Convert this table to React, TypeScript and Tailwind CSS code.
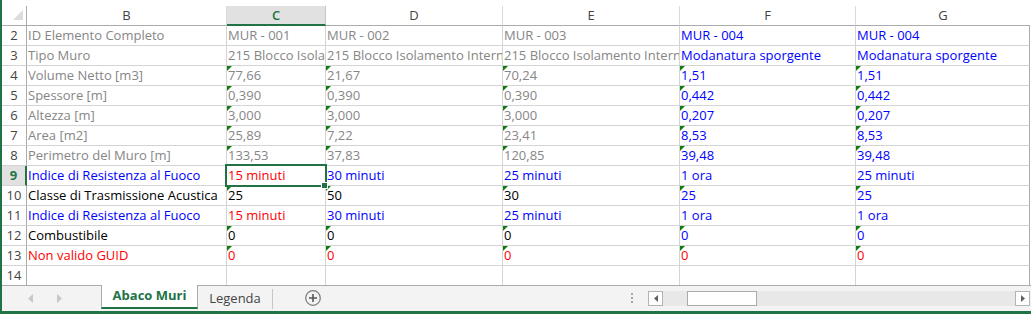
import React from 'react';

type C = 'g' | 'b' | 'r' | 'k';
const colorCls: Record<C, string> = {
  g: 'text-[#868686]',
  b: 'text-[#0000ff]',
  r: 'text-[#ff0000]',
  k: 'text-black',
};

type Row = { n: number; tri?: boolean; cells: [string, C][] };

const T3 = '215 Blocco Isolamento Interno';

const rows: Row[] = [
  { n: 2, cells: [['ID Elemento Completo', 'g'], ['MUR - 001', 'g'], ['MUR - 002', 'g'], ['MUR - 003', 'g'], ['MUR - 004', 'b'], ['MUR - 004', 'b']] },
  { n: 3, cells: [['Tipo Muro', 'g'], [T3, 'g'], [T3, 'g'], [T3, 'g'], ['Modanatura sporgente', 'b'], ['Modanatura sporgente', 'b']] },
  { n: 4, tri: true, cells: [['Volume Netto [m3]', 'g'], ['77,66', 'g'], ['21,67', 'g'], ['70,24', 'g'], ['1,51', 'b'], ['1,51', 'b']] },
  { n: 5, tri: true, cells: [['Spessore [m]', 'g'], ['0,390', 'g'], ['0,390', 'g'], ['0,390', 'g'], ['0,442', 'b'], ['0,442', 'b']] },
  { n: 6, tri: true, cells: [['Altezza [m]', 'g'], ['3,000', 'g'], ['3,000', 'g'], ['3,000', 'g'], ['0,207', 'b'], ['0,207', 'b']] },
  { n: 7, tri: true, cells: [['Area [m2]', 'g'], ['25,89', 'g'], ['7,22', 'g'], ['23,41', 'g'], ['8,53', 'b'], ['8,53', 'b']] },
  { n: 8, tri: true, cells: [['Perimetro del Muro [m]', 'g'], ['133,53', 'g'], ['37,83', 'g'], ['120,85', 'g'], ['39,48', 'b'], ['39,48', 'b']] },
  { n: 9, cells: [['Indice di Resistenza al Fuoco', 'b'], ['15 minuti', 'r'], ['30 minuti', 'b'], ['25 minuti', 'b'], ['1 ora', 'b'], ['25 minuti', 'b']] },
  { n: 10, tri: true, cells: [['Classe di Trasmissione Acustica', 'k'], ['25', 'k'], ['50', 'k'], ['30', 'k'], ['25', 'b'], ['25', 'b']] },
  { n: 11, cells: [['Indice di Resistenza al Fuoco', 'b'], ['15 minuti', 'r'], ['30 minuti', 'b'], ['25 minuti', 'b'], ['1 ora', 'b'], ['1 ora', 'b']] },
  { n: 12, tri: true, cells: [['Combustibile', 'k'], ['0', 'k'], ['0', 'k'], ['0', 'k'], ['0', 'b'], ['0', 'b']] },
  { n: 13, tri: true, cells: [['Non valido GUID', 'r'], ['0', 'r'], ['0', 'r'], ['0', 'r'], ['0', 'r'], ['0', 'r']] },
];

const letters = ['B', 'C', 'D', 'E', 'F', 'G'];

function Tri() {
  return (
    <div className="absolute left-0 top-0 w-0 h-0 border-t-[5px] border-r-[5px] border-t-[#107c10] border-r-transparent" />
  );
}

export default function App() {
  return (
    <div className="w-[1031px] h-[314px] bg-white border-l-2 border-[#217346] flex flex-col overflow-hidden font-['Open_Sans',sans-serif] text-[13px]">
      <div className="h-[6px] shrink-0" />
      <div className="grid grid-cols-[25px_200px_99px_177px_177px_176px_174px] shrink-0">
        {/* header row */}
        <div className="relative h-[20px] border-r border-b border-[#ababab]">
          <svg className="absolute left-0 top-0" width="24" height="19" viewBox="0 0 24 19">
            <polygon points="21,4 21,14 11,14" fill="#dcdcdc" />
          </svg>
        </div>
        {letters.map((l, i) =>
          l === 'C' ? (
            <div
              key={l}
              className="h-[20px] bg-[#e1e1e1] border-r border-r-[#c6c6c6] border-b-2 border-b-[#217346] flex items-center justify-center text-[#217346] font-semibold leading-none"
            >
              {l}
            </div>
          ) : (
            <div
              key={l}
              className={`h-[20px] border-b border-b-[#ababab] flex items-center justify-center text-[#444] leading-none ${
                i === 5 ? '' : 'border-r border-r-[#dadada]'
              }`}
            >
              {l}
            </div>
          )
        )}
        {rows.map((r) => (
          <React.Fragment key={r.n}>
            {r.n === 9 ? (
              <div className="h-[20px] bg-[#e1e1e1] border-r-2 border-r-[#217346] border-b border-b-[#d4d4d4] text-center leading-[19px] text-[#217346] font-bold">
                {r.n}
              </div>
            ) : (
              <div className="h-[20px] border-r border-r-[#ababab] border-b border-b-[#d4d4d4] text-center leading-[19px] text-[#444]">
                {r.n}
              </div>
            )}
            {r.cells.map(([t, c], i) => (
              <div
                key={i}
                className={`relative h-[20px] border-b border-b-[#d4d4d4] border-r ${
                  i === 5 ? 'border-r-[#ababab]' : 'border-r-[#d4d4d4]'
                }`}
              >
                <div className={`h-[19px] overflow-hidden whitespace-nowrap pl-px leading-[19px] ${colorCls[c]}`}>{t}</div>
                {r.tri && i > 0 && <Tri />}
                {r.n === 9 && i === 1 && (
                  <>
                    <div className="absolute z-10 -left-[2px] -top-[2px] w-[102px] h-[23px] border-2 border-[#217346]" />
                    <div className="absolute z-20 left-[94px] top-[16px] w-[7px] h-[7px] bg-[#217346] border border-white" />
                  </>
                )}
              </div>
            ))}
          </React.Fragment>
        ))}
        {/* row 14 */}
        <div className="h-[19px] border-r border-r-[#ababab] text-center leading-[19px] text-[#444]">14</div>
        {letters.map((l, i) => (
          <div
            key={l}
            className={`h-[19px] border-r ${i === 5 ? 'border-r-[#ababab]' : 'border-r-[#d4d4d4]'}`}
          />
        ))}
      </div>

      {/* sheet tabs bar */}
      <div className="flex h-[26px] shrink-0 bg-[#f3f3f3]">
        <div className="w-[99px] border-t border-[#ababab] flex items-center pl-[26px] gap-[24px]">
          <svg width="5" height="9" viewBox="0 0 5 9">
            <polygon points="5,0 0,4.5 5,9" fill="#c8c8c8" />
          </svg>
          <svg width="5" height="9" viewBox="0 0 5 9">
            <polygon points="0,0 5,4.5 0,9" fill="#c8c8c8" />
          </svg>
        </div>
        <div className="w-[97px] h-[24px] bg-white border-x border-x-[#ababab] border-b-2 border-b-[#217346] flex items-center justify-center text-[#217346] font-bold">
          Abaco Muri
        </div>
        <div className="w-[74px] border-t border-[#ababab] flex items-center justify-center text-[#444]">
          Legenda
        </div>
        <div className="w-px border-t border-[#ababab] flex items-center">
          <div className="w-px h-[20px] bg-[#c6c6c6]" />
        </div>
        <div className="flex-1 border-t border-[#ababab] flex items-start pt-[4px]">
          <svg className="ml-[32px]" width="16" height="16" viewBox="0 0 16 16">
            <circle cx="8" cy="8" r="7.3" fill="none" stroke="#7a7a7a" strokeWidth="1.2" />
            <path d="M8 4v8M4 8h8" stroke="#555" strokeWidth="1.6" />
          </svg>
          <div className="flex-1" />
          <div className="mt-[3px] w-[3px] flex flex-col gap-[2px]">
            <div className="w-[2px] h-[2px] bg-[#a6a6a6]" />
            <div className="w-[2px] h-[2px] bg-[#a6a6a6]" />
            <div className="w-[2px] h-[2px] bg-[#a6a6a6]" />
          </div>
          <div className="ml-[14px] mr-px mt-[1px] flex h-[15px]">
            <div className="w-[15px] h-[15px] bg-white border border-[#b4b4b4] flex items-center justify-center">
              <svg width="4" height="7" viewBox="0 0 4 7">
                <polygon points="4,0 0,3.5 4,7" fill="#606060" />
              </svg>
            </div>
            <div className="w-[352px] h-[15px] bg-[#e8e8e8] pl-[24px]">
              <div className="w-[70px] h-[15px] bg-white border border-[#ababab]" />
            </div>
            <div className="w-[15px] h-[15px] bg-white border border-[#b4b4b4] flex items-center justify-center">
              <svg width="4" height="7" viewBox="0 0 4 7">
                <polygon points="0,0 4,3.5 0,7" fill="#606060" />
              </svg>
            </div>
          </div>
        </div>
      </div>
      <div className="h-[3px] shrink-0 bg-[#217346]" />
    </div>
  );
}
